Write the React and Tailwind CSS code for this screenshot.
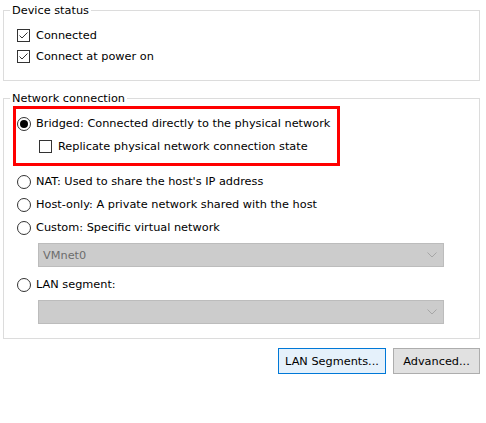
const Check = ({ checked }) => (
  <svg width="13" height="13" viewBox="0 0 13 13" className="shrink-0">
    <rect x="0.5" y="0.5" width="12" height="12" fill="#ffffff" stroke="#333333" />
    {checked && (
      <polyline points="2.5,6.5 5,9 10.5,3.5" fill="none" stroke="#333333" strokeWidth="1" />
    )}
  </svg>
);

const Radio = ({ checked }) => (
  <svg width="14" height="14" viewBox="0 0 14 14" className="shrink-0">
    <circle cx="7" cy="7" r="6.5" fill="#ffffff" stroke="#333333" />
    {checked && <circle cx="7" cy="7" r="4" fill="#000000" />}
  </svg>
);

const Row = ({ children, className = "" }) => (
  <div className={`flex h-[21px] items-center ${className}`}>{children}</div>
);

const Dropdown = ({ value }) => (
  <div className="ml-[34px] flex h-[24px] w-[406px] items-center justify-between border border-[#bcbcbc] bg-[#cccccc] pl-[4px] pr-[6px] text-[#6d6d6d]">
    <span>{value}</span>
    <svg width="10" height="6" viewBox="0 0 10 6">
      <polyline points="0.5,0.5 5,5 9.5,0.5" fill="none" stroke="#a6a6a6" strokeWidth="1" />
    </svg>
  </div>
);

export default function App() {
  return (
    <div className="h-[423px] w-[486px] bg-white pt-[4px] text-[11.3px] leading-[13px] text-black" style={{ fontFamily: '"DejaVu Sans", Verdana, sans-serif' }}>
      <fieldset className="ml-[3px] w-[477px] border border-[#dcdcdc] pb-[13px] pt-[8px]">
        <legend className="ml-[6px] px-[2px]">Device status</legend>
        <Row className="pl-[13px]">
          <Check checked />
          <span className="ml-[6px]">Connected</span>
        </Row>
        <Row className="pl-[13px]">
          <Check checked />
          <span className="ml-[6px]">Connect at power on</span>
        </Row>
      </fieldset>

      <fieldset className="ml-[3px] mt-[11px] w-[477px] border border-[#dcdcdc] pb-[14px] pt-[1px]">
        <legend className="ml-[6px] px-[2px]">Network connection</legend>
        <div className="ml-[9px] h-[60px] w-[327px] border-[3px] border-[#ff0000] pl-[1px] pt-[4px]">
          <Row>
            <Radio checked />
            <span className="ml-[5px]">Bridged: Connected directly to the physical network</span>
          </Row>
          <Row className="mt-[2px] pl-[22px]">
            <Check />
            <span className="ml-[6px]">Replicate physical network connection state</span>
          </Row>
        </div>
        <div className="mt-[5px] flex flex-col gap-[2px] pl-[13px]">
          <Row>
            <Radio />
            <span className="ml-[5px]">NAT: Used to share the host's IP address</span>
          </Row>
          <Row>
            <Radio />
            <span className="ml-[5px]">Host-only: A private network shared with the host</span>
          </Row>
          <Row>
            <Radio />
            <span className="ml-[5px]">Custom: Specific virtual network</span>
          </Row>
        </div>
        <div className="mt-[5px]">
          <Dropdown value="VMnet0" />
        </div>
        <Row className="mt-[7px] pl-[13px]">
          <Radio />
          <span className="ml-[5px]">LAN segment:</span>
        </Row>
        <div className="mt-[5px]">
          <Dropdown value="" />
        </div>
      </fieldset>

      <div className="mt-[9px] flex justify-end gap-[7px] pr-[6px]">
        <button className="h-[26px] w-[108px] border border-[#0078d7] bg-[#e5f1fb]">LAN Segments...</button>
        <button className="h-[26px] w-[87px] border border-[#adadad] bg-[#e1e1e1]">Advanced...</button>
      </div>
    </div>
  );
}
